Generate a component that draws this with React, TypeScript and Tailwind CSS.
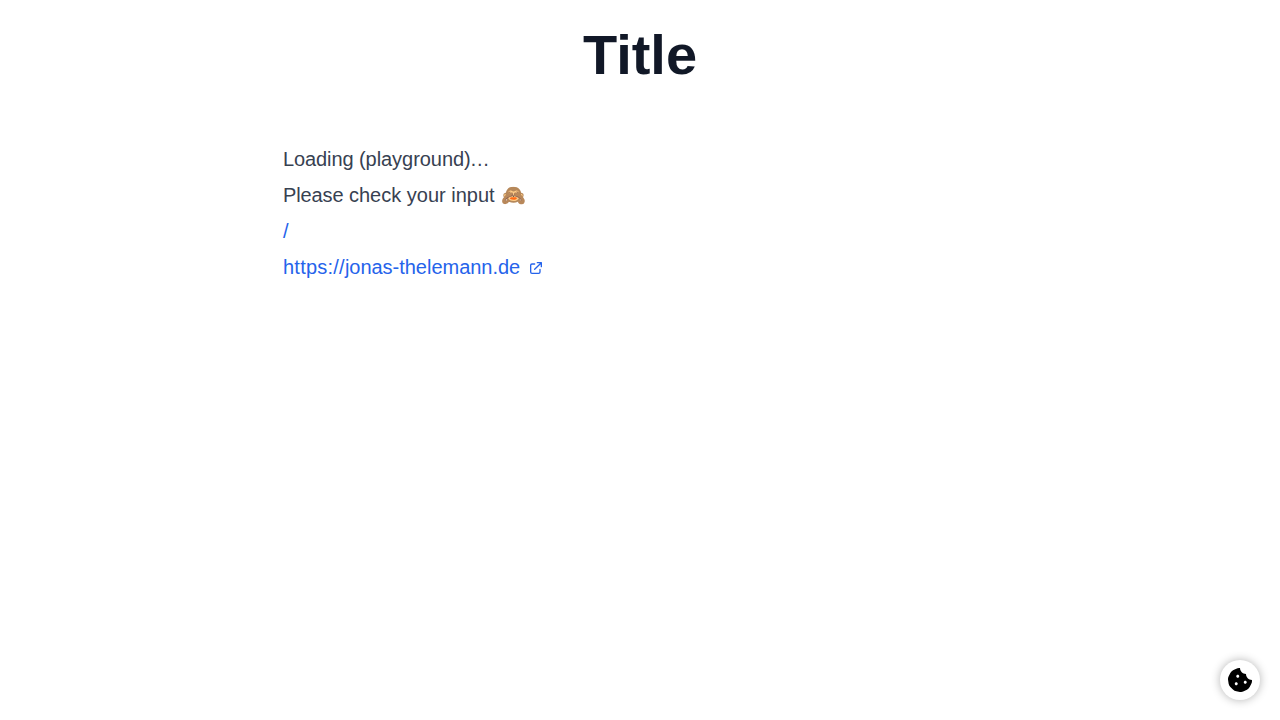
import { HiOutlineExternalLink } from "react-icons/hi";

function CookieIcon() {
  return (
    <svg className="size-6" viewBox="0 0 512 512" fill="currentColor" aria-hidden="true">
      <path d="M510.52 255.82c-69.97-.85-126.47-57.69-126.47-127.86-70.17 0-127-56.49-127.86-126.45-27.26-4.14-55.13.3-79.72 12.82l-69.13 35.22a132.221 132.221 0 0 0-57.79 57.81l-35.1 68.88a132.645 132.645 0 0 0-12.82 80.95l12.08 76.27a132.521 132.521 0 0 0 37.16 72.96l54.77 54.76a132.036 132.036 0 0 0 72.71 37.06l76.71 12.15c27.51 4.36 55.7-.11 80.53-12.76l69.13-35.21a132.273 132.273 0 0 0 57.79-57.81l35.1-68.88c12.56-24.64 17.01-52.58 12.91-79.91zM176 368c-17.67 0-32-14.33-32-32s14.33-32 32-32 32 14.33 32 32-14.33 32-32 32zm32-160c-17.67 0-32-14.33-32-32s14.33-32 32-32 32 14.33 32 32-14.33 32-32 32zm160 128c-17.67 0-32-14.33-32-32s14.33-32 32-32 32 14.33 32 32-14.33 32-32 32z" />
    </svg>
  );
}

export default function App() {
  return (
    <div className="min-h-screen bg-white p-4 font-['Liberation_Sans',sans-serif] text-xl leading-9 text-[#374151]">
      <main className="mx-auto w-[714px]">
        <h1 className="mb-12 pt-2 text-center text-[56px] leading-[61px] font-extrabold text-[#111827]">Title</h1>
        <div className="pt-2">
          <div className="h-9"><span className="tracking-[-0.1px]">Loading </span><span className="tracking-[-0.05px]">(playground)</span><span className="-ml-px">…</span></div>
          <div className="h-9"><span className="tracking-[-0.12px]">Please </span><span className="tracking-[0.01px]">check your input</span><span className="ml-[0.3px]"> 🙈</span></div>
          <div className="h-9"><a href="#" className="text-[#2563eb]">/</a></div>
          <a href="#" className="flex h-9 items-center gap-2 text-[#2563eb]">
            <span><span className="tracking-[0.23px]">https://</span><span className="tracking-[-0.02px]">jonas-thelemann.de</span></span>
            <HiOutlineExternalLink className="mt-0.5 size-4" />
          </a>
        </div>
      </main>
      <button aria-label="Cookie control" className="fixed right-5 bottom-5 flex size-10 items-center justify-center rounded-full bg-white text-black shadow-[0_0_10px_rgba(0,0,0,0.3)]">
        <CookieIcon />
      </button>
    </div>
  );
}
